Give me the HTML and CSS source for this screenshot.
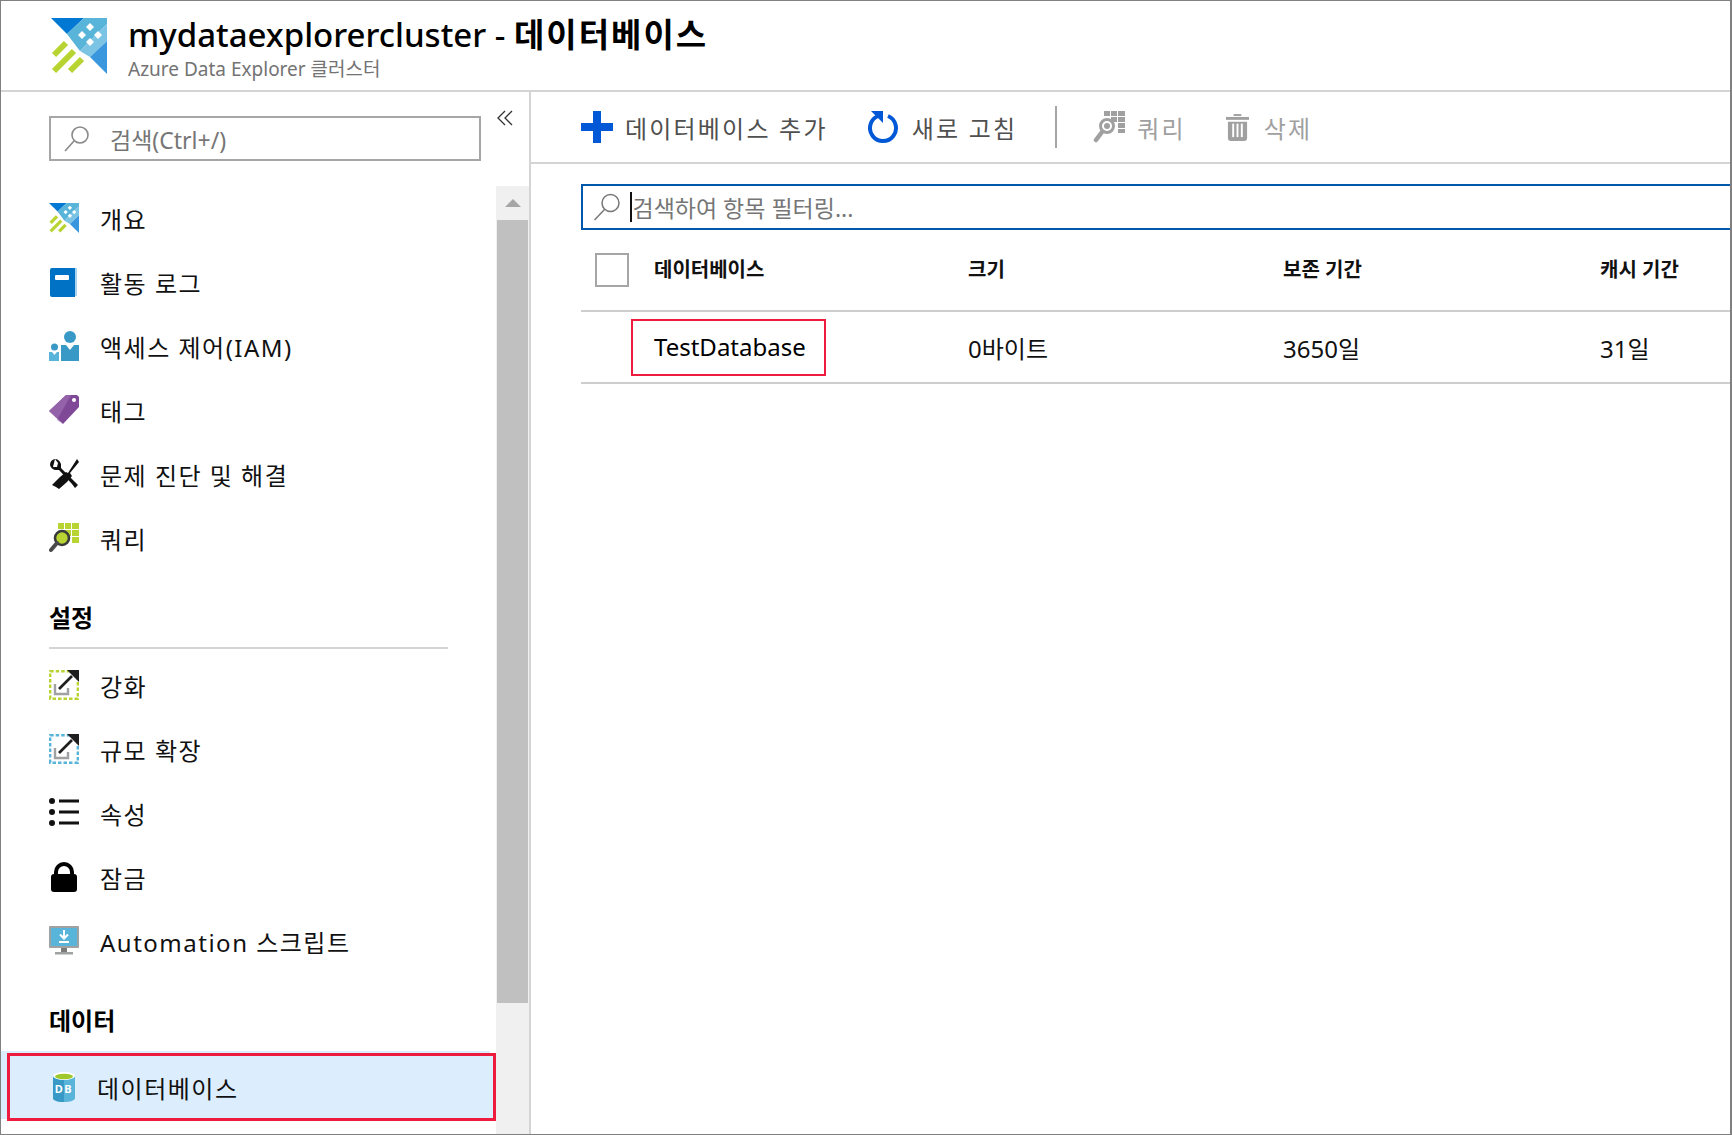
FILE: index.html
```html
<!DOCTYPE html>
<html lang="ko">
<head>
  <meta charset="UTF-8" />
  <meta name="viewport" content="width=device-width, initial-scale=1.0" />
  <title>mydataexplorercluster - 데이터베이스</title>
  <link rel="stylesheet" href="styles.css">
</head>
<body>
  <svg class="defs" width="0" height="0">
    <symbol id="adx" viewBox="0 0 56 56">
      <polygon points="0,0 33,0 16,16" fill="#0078d4"/>
      <polygon points="33,0 56,0 56,6 29,33 16,16" fill="#59b4d9"/>
      <polygon points="56,6 56,23 39,39 29,33" fill="#7cc4e4"/>
      <polygon points="56,23 56,56 39,39" fill="#3a96dd"/>
      <g fill="#fff">
        <polygon points="39,5 43,9 39,13 35,9"/>
        <polygon points="31,13 35,17 31,21 27,17"/>
        <polygon points="47,13 51,17 47,21 43,17"/>
        <polygon points="39,20 43,24 39,28 35,24"/>
      </g>
      <g stroke="#b8d432" stroke-width="6">
        <line x1="3" y1="37" x2="15" y2="25"/>
        <line x1="3" y1="53" x2="23" y2="33"/>
        <line x1="19" y1="53" x2="31" y2="41"/>
      </g>
    </symbol>
    <symbol id="growth" viewBox="0 0 30 30">
      <path d="M6 14v10h13v-6" fill="none" stroke="#a0a1a2" stroke-width="2.4"/>
      <path d="M10 19 23 6" stroke="#1e1e1e" stroke-width="2.6"/>
      <polygon points="18,0 30,0 30,12" fill="#1e1e1e"/>
    </symbol>
  </svg>

  <div class="frame">
    <header class="page-head">
      <svg class="logo"><use href="#adx"/></svg>
      <div>
        <h1 class="title">mydataexplorercluster - <span class="title-ko">데이터베이스</span></h1>
        <div class="subtitle">Azure Data Explorer 클러스터</div>
      </div>
    </header>

    <div class="body">
      <aside class="side">
        <div class="side-top">
          <div class="side-search">
            <svg class="glass" viewBox="0 0 28 28"><circle cx="17" cy="10" r="8" fill="none" stroke="#8a8a8a" stroke-width="1.6"/><line x1="11" y1="16" x2="2" y2="26" stroke="#8a8a8a" stroke-width="1.6"/></svg>
            <span>검색(Ctrl+/)</span>
          </div>
          <svg class="collapse" viewBox="0 0 16 16"><path d="M8 1 1 8l7 7M15 1 8 8l7 7" fill="none" stroke="#333" stroke-width="1.3"/></svg>
        </div>
        <div class="side-scroll">
          <nav class="nav">
            <a class="nav-item"><svg class="ico"><use href="#adx"/></svg>개요</a>
            <a class="nav-item">
              <svg class="ico" viewBox="0 0 30 30"><path d="M2 2q0-1 1-1h25v28H3q-2 0-2-2z" fill="#a9d3ef"/><path d="M1 3q0-2 2-2h23v29H3q-2 0-2-2z" fill="#0072c6"/><rect x="6" y="8" width="14" height="5" rx="1" fill="#fff"/></svg>
              활동 로그
            </a>
            <a class="nav-item">
              <svg class="ico" viewBox="0 0 30 30"><circle cx="21" cy="6" r="6" fill="#3999c6"/><path d="M12 14h5l4 5 4-5h5v16H12z" fill="#3999c6"/><circle cx="5.500" cy="16" r="3.500" fill="#3999c6"/><path d="M0 21h3l2.500 3 2.500-3h2v9H0z" fill="#59b4d9"/></svg>
              액세스 제어(IAM)
            </a>
            <a class="nav-item">
              <svg class="ico" viewBox="0 0 30 30"><polygon points="0,16 17,0 28,0 30,2 30,12 14,29" fill="#804998"/><polygon points="0,16 17,0 22,0 8,25 14,29" fill="#9b6eb0" opacity=".7"/><circle cx="25" cy="5" r="2" fill="#fff"/></svg>
              태그
            </a>
            <a class="nav-item">
              <svg class="ico" viewBox="0 0 30 30"><path d="M27 0 14 13l-2-1-1 1-2 2-8 9-1 2 3 3 2-1 9-9 2-2 1-2 0-1L29 2z" fill="#111" opacity="0"/><path d="M6 0Q1 1 1 6q1 4 5 5l4 0 13 14 3 4 3-3-3-3L12 9V5Q10 0 6 0l3 4-1 4-4 0z" fill="#111"/><path d="M28 0l2 3-9 11 2 3-5 6-8 7-3-2-4-2 8-8 6-5 2 1z" fill="#111"/></svg>
              문제 진단 및 해결
            </a>
            <a class="nav-item">
              <svg class="ico" viewBox="0 0 30 30"><g fill="#b8d432"><rect x="9" y="0" width="6" height="6"/><rect x="16" y="0" width="6" height="6"/><rect x="23" y="0" width="7" height="6"/><rect x="16" y="7" width="6" height="6"/><rect x="23" y="7" width="7" height="6"/><rect x="23" y="14" width="7" height="6"/></g><circle cx="13" cy="15" r="7" fill="#b8d432" stroke="#3a3a3a" stroke-width="2.6"/><line x1="8" y1="20" x2="2" y2="27" stroke="#4a4a4a" stroke-width="4" stroke-linecap="round"/></svg>
              쿼리
            </a>

            <div class="nav-section nav-section-ruled">설정</div>
            <a class="nav-item">
              <svg class="ico" viewBox="0 0 30 30"><rect x="1.200" y="1.200" width="27.600" height="27.600" fill="none" stroke="#b8d432" stroke-width="2.400" stroke-dasharray="3.500 2"/><use href="#growth"/></svg>
              강화
            </a>
            <a class="nav-item">
              <svg class="ico" viewBox="0 0 30 30"><rect x="1.200" y="1.200" width="27.600" height="27.600" fill="none" stroke="#59b4d9" stroke-width="2.400" stroke-dasharray="3.500 2"/><use href="#growth"/></svg>
              규모 확장
            </a>
            <a class="nav-item">
              <svg class="ico" viewBox="0 0 30 30"><g fill="#111"><circle cx="3" cy="3" r="3"/><circle cx="3" cy="14" r="3"/><circle cx="3" cy="25" r="3"/><rect x="10" y="1.500" width="20" height="3"/><rect x="10" y="12.500" width="20" height="3"/><rect x="10" y="23.500" width="20" height="3"/></g></svg>
              속성
            </a>
            <a class="nav-item">
              <svg class="ico" viewBox="0 0 30 30"><path d="M7 13V10a8 8 0 0 1 16 0v3" fill="none" stroke="#000" stroke-width="4"/><rect x="2" y="12" width="26" height="18" rx="3" fill="#000"/></svg>
              잠금
            </a>
            <a class="nav-item">
              <svg class="ico" viewBox="0 0 30 30"><rect x="0" y="0" width="30" height="22" rx="1" fill="#a0a1a2"/><rect x="2" y="2" width="26" height="18" fill="#59b4d9"/><path d="M15 4v8M11 8.500l4 4 4-4" fill="none" stroke="#fff" stroke-width="2"/><rect x="10" y="15" width="10" height="2" fill="#fff"/><rect x="12" y="22" width="6" height="4" fill="#7a7a7a"/><rect x="6" y="26" width="18" height="2.500" fill="#a0a1a2"/></svg>
              Automation 스크립트
            </a>

            <div class="nav-section">데이터</div>
            <a class="nav-item nav-item-active">
              <svg class="ico ico-db" viewBox="0 0 24 30"><path d="M1 4v22c0 2.500 5 4 11 4s11-1.500 11-4V4z" fill="#59b4d9"/><path d="M1 4v22c0 2.500 5 4 11 4V4z" fill="#3999c6"/><ellipse cx="12" cy="4" rx="11" ry="4" fill="#fff"/><ellipse cx="12" cy="4.500" rx="9" ry="2.800" fill="#9fc82c"/><text x="12" y="21" class="db-text">DB</text></svg>
              데이터베이스
            </a>
          </nav>
          <div class="scrollbar">
            <div class="scroll-arrow"></div>
            <div class="scroll-thumb"></div>
          </div>
        </div>
      </aside>

      <main class="main">
        <div class="toolbar">
          <a class="tool">
            <svg class="tool-plus" viewBox="0 0 32 32"><path d="M12 0h8v12h12v8H20v12h-8V20H0v-8h12z" fill="#0058d6"/></svg>
            데이터베이스 추가
          </a>
          <a class="tool tool-refresh">
            <svg class="tool-ref" viewBox="0 0 32 32"><path d="M20 5a13 13 0 1 1-10 0" fill="none" stroke="#0058d6" stroke-width="4"/><polygon points="3,0 15,0 15,12" fill="#0058d6"/></svg>
            새로 고침
          </a>
          <div class="tool-sep"></div>
          <a class="tool tool-off tool-query">
            <svg class="tool-q" viewBox="0 0 32 32"><g fill="#a0a0a0"><rect x="11" y="0" width="6" height="5"/><rect x="18" y="0" width="6" height="5"/><rect x="25" y="0" width="7" height="5"/><rect x="18" y="6" width="6" height="5"/><rect x="25" y="6" width="7" height="5"/><rect x="25" y="12" width="7" height="5"/><rect x="25" y="18" width="7" height="4"/></g><circle cx="14" cy="15" r="6.500" fill="#fff" stroke="#a0a0a0" stroke-width="3"/><circle cx="14" cy="15" r="3" fill="#a0a0a0"/><line x1="9" y1="21" x2="3" y2="29" stroke="#a0a0a0" stroke-width="4.500" stroke-linecap="round"/></svg>
            쿼리
          </a>
          <a class="tool tool-off tool-trash">
            <svg class="tool-t" viewBox="0 0 24 28"><rect x="8" y="0" width="8" height="2" fill="#a0a0a0"/><rect x="0" y="3" width="24" height="3" fill="#a0a0a0"/><path d="M2 8h20v17q0 3-3 3H5q-3 0-3-3z" fill="#a0a0a0"/><g fill="#fff"><rect x="6.500" y="10" width="2" height="14"/><rect x="11" y="10" width="2" height="14"/><rect x="15.500" y="10" width="2" height="14"/></g></svg>
            삭제
          </a>
        </div>

        <div class="content">
          <div class="filter">
            <svg class="filter-glass" viewBox="0 0 28 28"><circle cx="17" cy="10" r="8.500" fill="none" stroke="#777" stroke-width="1.500"/><line x1="11" y1="16.500" x2="1" y2="27" stroke="#777" stroke-width="1.500"/></svg>
            <span class="caret"></span>
            <span>검색하여 항목 필터링...</span>
          </div>

          <div class="row row-head">
            <div class="cell-check"><span class="checkbox"></span></div>
            <div class="cell">데이터베이스</div>
            <div class="cell">크기</div>
            <div class="cell">보존 기간</div>
            <div class="cell">캐시 기간</div>
          </div>
          <div class="row row-data">
            <div class="cell-check"></div>
            <div class="cell"><span class="db-name">TestDatabase</span></div>
            <div class="cell">0바이트</div>
            <div class="cell">3650일</div>
            <div class="cell">31일</div>
          </div>
        </div>
      </main>
    </div>
  </div>
</body>
</html>
```

FILE: styles.css
```css
* {
  box-sizing: border-box;
}
body {
  margin: 0;
  background-color: #fff;
  font-family: "Noto Sans", "Noto Sans CJK KR", sans-serif;
  color: #111;
}
.defs {
  display: block;
  height: 0;
}
.frame {
  width: 1732px;
  height: 1135px;
  border: solid #808080;
  border-width: 1px 2px 1px 1px;
  display: flex;
  flex-direction: column;
  overflow: hidden;
}

/* page header */
.page-head {
  height: 91px;
  flex: none;
  border-bottom: 2px solid #d4d4d4;
  display: flex;
  align-items: flex-start;
  padding: 17px 0 0 50px;
  gap: 21px;
}
.logo {
  width: 56px;
  height: 56px;
  flex: none;
}
.title {
  margin: -5px 0 0;
  font-size: 33px;
  line-height: 44px;
  font-weight: 500;
  color: #000;
  white-space: nowrap;
}
.title-ko {
  font-weight: 700;
  letter-spacing: 2px;
}
.subtitle {
  font-size: 19px;
  line-height: 24px;
  color: #737373;
  margin-top: 0;
}

.body {
  flex: 1;
  display: flex;
  min-height: 0;
}

/* left blade menu */
.side {
  width: 530px;
  flex: none;
  border-right: 2px solid #d4d4d4;
  display: flex;
  flex-direction: column;
}
.side-top {
  height: 94px;
  flex: none;
  display: flex;
  align-items: flex-start;
  padding: 24px 0 0 48px;
}
.side-search {
  width: 432px;
  height: 45px;
  border: 2px solid #a6a6a6;
  display: flex;
  align-items: center;
  padding-left: 12px;
  gap: 19px;
  font-size: 23px;
  color: #767676;
}
.glass {
  width: 28px;
  height: 28px;
}
.collapse {
  width: 16px;
  height: 16px;
  margin: -6px 0 0 16px;
}
.side-scroll {
  flex: 1;
  display: flex;
  min-height: 0;
}
.nav {
  flex: 1;
  min-width: 0;
}
.nav-item {
  height: 64px;
  display: flex;
  align-items: center;
  padding-left: 48px;
  gap: 21px;
  font-size: 24px;
  letter-spacing: 1.5px;
  color: #111;
}
.ico {
  width: 30px;
  height: 30px;
  flex: none;
}
.nav-section {
  height: 48px;
  margin-top: 32px;
  padding-left: 48px;
  font-size: 24px;
  line-height: 32px;
  font-weight: 700;
  color: #000;
}
.nav-section-ruled {
  height: 49px;
  margin: 32px 48px 2px 0;
  margin-left: 0;
  position: relative;
}
.nav-section-ruled::after {
  content: "";
  display: block;
  margin: 13px 0 0 0;
  height: 2px;
  background-color: #d4d4d4;
}
.nav-item-active {
  height: 68px;
  margin-left: 6px;
  padding-left: 42px;
  background-color: #dcedfd;
  border: 3px solid #ed1c3f;
  box-shadow: -6px -2px 0 #dcedfd;
  gap: 21px;
}
.nav-item-active .ico-db {
  width: 24px;
  margin-left: 0;
}
.db-text {
  font-family: "Noto Sans", sans-serif;
  font-size: 11px;
  font-weight: 700;
  fill: #fff;
  text-anchor: middle;
}
.scrollbar {
  width: 33px;
  flex: none;
  background-color: #f0f0f0;
  padding: 0 1px;
}
.scroll-arrow {
  width: 0;
  height: 0;
  margin: 13px auto 13px;
  border-left: 8px solid transparent;
  border-right: 8px solid transparent;
  border-bottom: 8px solid #a6a6a6;
}
.scroll-thumb {
  height: 783px;
  background-color: #c0c0c0;
}

/* main area */
.main {
  flex: 1;
  min-width: 0;
  overflow: hidden;
}
.toolbar {
  height: 72px;
  border-bottom: 2px solid #d4d4d4;
  display: flex;
  align-items: center;
  padding-left: 50px;
  font-size: 24px;
  letter-spacing: 2.2px;
  color: #505050;
}
.tool {
  display: flex;
  align-items: center;
  gap: 12px;
}
.tool-plus {
  width: 32px;
  height: 32px;
}
.tool-refresh {
  margin-left: 40px;
}
.tool-ref {
  width: 32px;
  height: 32px;
}
.tool-sep {
  width: 2px;
  height: 42px;
  margin-left: 38px;
  background-color: #a6a6a6;
}
.tool-off {
  color: #a0a0a0;
}
.tool-query {
  margin-left: 36px;
}
.tool-q {
  width: 32px;
  height: 32px;
}
.tool-trash {
  margin-left: 40px;
  gap: 15px;
}
.tool-t {
  width: 23px;
  height: 27px;
}
.content {
  padding: 20px 0 0 50px;
}
.filter {
  height: 46px;
  margin-right: -4px;
  border: 2px solid #0058ad;
  display: flex;
  align-items: center;
  padding-left: 10px;
  font-size: 23px;
  color: #767676;
}
.filter-glass {
  width: 29px;
  height: 28px;
  flex: none;
}
.caret {
  width: 1.500px;
  height: 30px;
  margin: 0 1px 0 8px;
  background-color: #111;
}
.row {
  display: grid;
  grid-template-columns: 73px 314px 315px 317px 1fr;
  align-items: center;
  border-bottom: 2px solid #cdcdcd;
}
.row-head {
  height: 82px;
  font-size: 20px;
  font-weight: 700;
  color: #111;
}
.row-head .cell {
  margin-top: -4px;
}
.row-data {
  height: 72px;
  font-size: 24px;
  color: #111;
}
.cell-check {
  padding-left: 14px;
  height: 34px;
}
.checkbox {
  display: block;
  width: 34px;
  height: 34px;
  border: 2px solid #a6a6a6;
}
.db-name {
  display: inline-block;
  width: 195px;
  height: 57px;
  line-height: 51px;
  margin-left: -23px;
  padding-left: 21px;
  border: 2px solid #ed1c3f;
  color: #000;
}
```
